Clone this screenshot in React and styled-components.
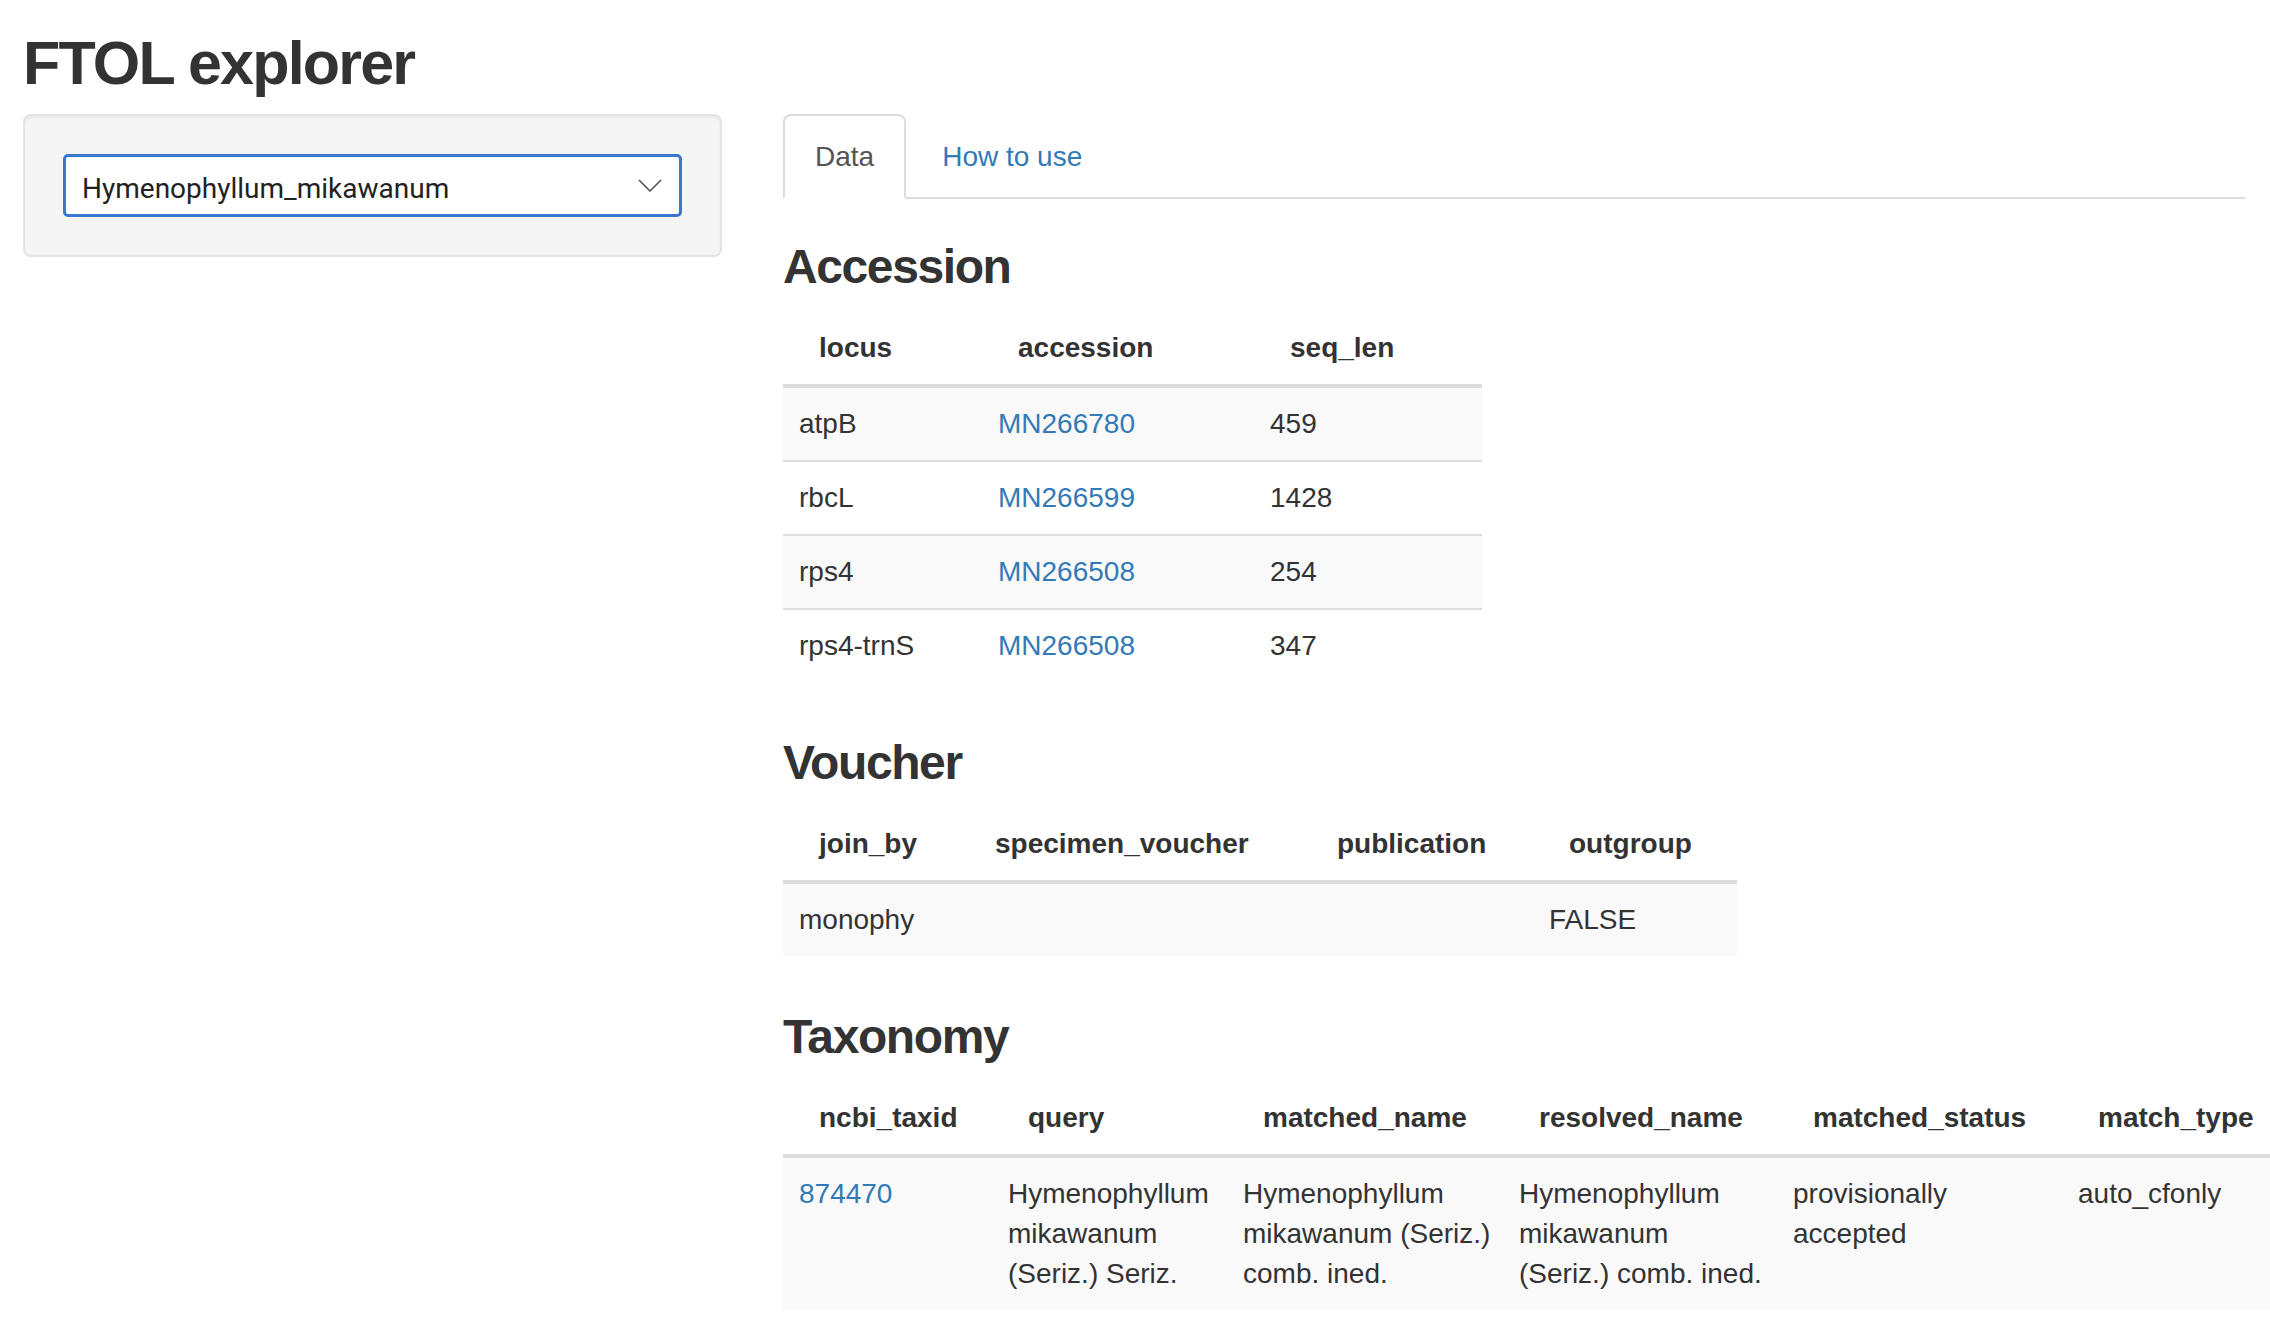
import React from 'react';
import styled, { createGlobalStyle } from 'styled-components';

const COLORS = {
    text: '#333333',
    muted: '#555555',
    link: '#337ab7',
    rule: '#dddddd',
    stripe: '#f9f9f9',
    well: '#f5f5f5',
    wellBorder: '#e3e3e3',
    focus: '#3a77d1',
};

const ACCESSION = {
    columns: [
        { key: 'locus', label: 'locus', width: 199 },
        { key: 'accession', label: 'accession', width: 272, link: true },
        { key: 'seq_len', label: 'seq_len', width: 228 },
    ],
    rows: [
        { locus: 'atpB', accession: 'MN266780', seq_len: '459' },
        { locus: 'rbcL', accession: 'MN266599', seq_len: '1428' },
        { locus: 'rps4', accession: 'MN266508', seq_len: '254' },
        { locus: 'rps4-trnS', accession: 'MN266508', seq_len: '347' },
    ],
};

const VOUCHER = {
    columns: [
        { key: 'join_by', label: 'join_by', width: 176 },
        { key: 'specimen_voucher', label: 'specimen_voucher', width: 342 },
        { key: 'publication', label: 'publication', width: 232 },
        { key: 'outgroup', label: 'outgroup', width: 204 },
    ],
    rows: [{ join_by: 'monophy', specimen_voucher: '', publication: '', outgroup: 'FALSE' }],
};

const TAXONOMY = {
    columns: [
        { key: 'ncbi_taxid', label: 'ncbi_taxid', width: 209, link: true },
        { key: 'query', label: 'query', width: 235 },
        { key: 'matched_name', label: 'matched_name', width: 276 },
        { key: 'resolved_name', label: 'resolved_name', width: 274 },
        { key: 'matched_status', label: 'matched_status', width: 285 },
        { key: 'match_type', label: 'match_type', width: 280 },
    ],
    rows: [
        {
            ncbi_taxid: '874470',
            query: ['Hymenophyllum', 'mikawanum', '(Seriz.) Seriz.'],
            matched_name: ['Hymenophyllum', 'mikawanum (Seriz.)', 'comb. ined.'],
            resolved_name: ['Hymenophyllum', 'mikawanum', '(Seriz.) comb. ined.'],
            matched_status: ['provisionally', 'accepted'],
            match_type: 'auto_cfonly',
        },
    ],
};

const GlobalStyle = createGlobalStyle`
    * { box-sizing: border-box; }
    html, body {
        margin: 0;
        padding: 0;
        overflow-x: hidden;
        background: #ffffff;
    }
    body {
        font-family: 'Liberation Sans', Arial, Helvetica, sans-serif;
        font-size: 28px;
        line-height: 40px;
        color: ${COLORS.text};
    }
`;

const Page = styled.div`
    padding: 0 25px 0 23px;
`;

const Title = styled.h2`
    margin: 30px 0 18px;
    font-size: 61px;
    line-height: 66px;
    font-weight: 700;
    letter-spacing: -1.8px;
`;

const Layout = styled.div`
    display: grid;
    grid-template-columns: 699px minmax(0, 1fr);
    column-gap: 61px;
    align-items: start;
`;

const Well = styled.aside`
    background: ${COLORS.well};
    border: 2px solid ${COLORS.wellBorder};
    border-radius: 8px;
    padding: 38px;
    box-shadow: inset 0 2px 2px rgba(0, 0, 0, 0.05);
`;

const Select = styled.div`
    height: 63px;
    display: flex;
    align-items: center;
    justify-content: space-between;
    padding: 6px 17px 0 16px;
    background: #ffffff;
    border: 3px solid ${COLORS.focus};
    border-radius: 5px;
    font-family: Roboto, 'Open Sans', sans-serif;
    font-size: 28px;
    line-height: normal;
    color: #222222;

    svg {
        margin-top: -6px;
    }
`;

const Main = styled.main`
    min-width: 0;
`;

const TabBar = styled.ul`
    display: flex;
    margin: 0;
    padding: 0;
    list-style: none;
    border-bottom: 2px solid ${COLORS.rule};
`;

const Tab = styled.li`
    margin: 0 4px -2px 0;
    padding: 21px 30px 20px;
    line-height: 40px;
    border: 2px solid ${(p) => (p.$active ? COLORS.rule : 'transparent')};
    border-bottom-color: transparent;
    border-radius: 8px 8px 0 0;
    background: ${(p) => (p.$active ? '#ffffff' : 'transparent')};
    color: ${(p) => (p.$active ? COLORS.muted : COLORS.link)};
`;

const TabContent = styled.div`
    display: flex;
    flex-direction: column;
    align-items: flex-start;
    padding-top: 1px;
`;

const SectionTitle = styled.h3`
    margin: 40px 0 20px;
    font-size: 48px;
    line-height: 53px;
    font-weight: 700;
    letter-spacing: -1.4px;
`;

const Table = styled.table`
    flex: none;
    border-collapse: separate;
    border-spacing: 0;
    table-layout: fixed;
    margin-bottom: 14px;

    tbody tr + tr > td {
        border-top: 2px solid ${COLORS.rule};
    }
`;

const Col = styled.col`
    width: ${(p) => p.$width}px;
`;

const Th = styled.th`
    padding: 15px 20px 16px 36px;
    text-align: left;
    vertical-align: bottom;
    font-weight: 700;
    white-space: nowrap;
    border-bottom: 4px solid ${COLORS.rule};
`;

const Row = styled.tr`
    background: ${(p) => (p.$striped ? COLORS.stripe : 'transparent')};
`;

const Td = styled.td`
    padding: 16px 20px 16px 16px;
    vertical-align: top;
    white-space: nowrap;
`;

const Link = styled.a`
    color: ${COLORS.link};
    text-decoration: none;
`;

const Chevron = () => (
    <svg width='24' height='13' viewBox='0 0 24 13'>
        <polyline points='1,1 12,12 23,1' fill='none' stroke='#555555' strokeWidth='1.6' />
    </svg>
);

const renderCell = (value, column) => {
    if (Array.isArray(value)) {
        return value.map((line, i) => (
            <React.Fragment key={i}>
                {i > 0 && <br />}
                {line}
            </React.Fragment>
        ));
    }
    if (column.link && value) return <Link href='#'>{value}</Link>;
    return value;
};

const DataTable = ({ data }) => {
    const total = data.columns.reduce((sum, c) => sum + c.width, 0);
    return (
        <Table style={{ width: total }}>
            <colgroup>
                {data.columns.map((c) => (
                    <Col key={c.key} $width={c.width} />
                ))}
            </colgroup>
            <thead>
                <tr>
                    {data.columns.map((c) => (
                        <Th key={c.key}>{c.label}</Th>
                    ))}
                </tr>
            </thead>
            <tbody>
                {data.rows.map((row, i) => (
                    <Row key={i} $striped={i % 2 === 0}>
                        {data.columns.map((c) => (
                            <Td key={c.key}>{renderCell(row[c.key], c)}</Td>
                        ))}
                    </Row>
                ))}
            </tbody>
        </Table>
    );
};

const App = () => {
    return (
        <Page>
            <GlobalStyle />
            <Title>FTOL explorer</Title>
            <Layout>
                <Well>
                    <Select>
                        <span>Hymenophyllum_mikawanum</span>
                        <Chevron />
                    </Select>
                </Well>
                <Main>
                    <TabBar>
                        <Tab $active>Data</Tab>
                        <Tab>How to use</Tab>
                    </TabBar>
                    <TabContent>
                        <SectionTitle>Accession</SectionTitle>
                        <DataTable data={ACCESSION} />
                        <SectionTitle>Voucher</SectionTitle>
                        <DataTable data={VOUCHER} />
                        <SectionTitle>Taxonomy</SectionTitle>
                        <DataTable data={TAXONOMY} />
                    </TabContent>
                </Main>
            </Layout>
        </Page>
    );
};

export default App;
